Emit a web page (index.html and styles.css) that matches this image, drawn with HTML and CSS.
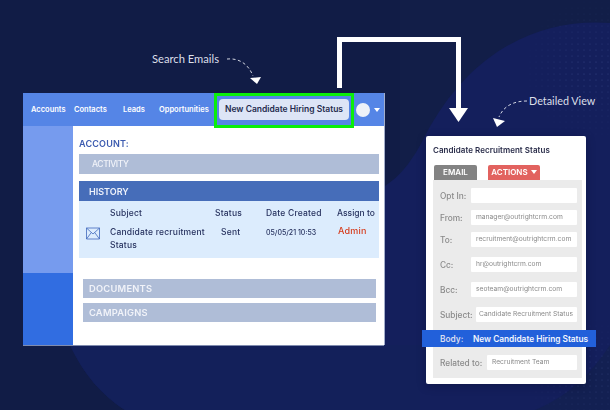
FILE: index.html
```html
<!DOCTYPE html>
<html lang="en">
<head>
<meta charset="utf-8">
<title>Candidate Hiring Status</title>
<link rel="stylesheet" href="styles.css">
</head>
<body>
<main class="canvas">
  <svg class="backdrop" width="610" height="410" viewBox="0 0 610 410" aria-hidden="true">
    <defs>
      <pattern id="dots" width="6" height="6" patternUnits="userSpaceOnUse">
        <circle cx="2" cy="2" r=".6" fill="#5a6bb0"/>
      </pattern>
      <radialGradient id="fade-a"><stop offset="0" stop-color="#fff"/><stop offset="1" stop-color="#000"/></radialGradient>
      <mask id="mask-a"><ellipse cx="590" cy="70" rx="70" ry="75" fill="url(#fade-a)"/></mask>
      <mask id="mask-b"><ellipse cx="590" cy="375" rx="70" ry="60" fill="url(#fade-a)"/></mask>
    </defs>
    <rect width="610" height="410" fill="#121e48"/>
    <path d="M0 0H400V410H0Z" fill="#111c46"/>
    <path d="M610 23C540 18 470 50 425 136C412 162 400 176 385 186L70 345C84 375 102 395 125 410H610Z" fill="#141f5c"/>
    <path d="M70 345H420V410H125C102 395 84 375 70 345Z" fill="#13205a"/>
    <path d="M535 410C570 395 590 375 610 345V410Z" fill="#132052"/>
    <rect width="610" height="410" fill="url(#dots)" mask="url(#mask-a)" opacity=".55"/>
    <rect width="610" height="410" fill="url(#dots)" mask="url(#mask-b)" opacity=".45"/>
  </svg>

  <div class="note note-search">Search Emails</div>
  <svg class="curve curve-search" width="40" height="30" viewBox="0 0 40 30" aria-hidden="true">
    <path d="M1 2C12 1 22 6 27 19" fill="none" stroke="#e8eaf2" stroke-width=".9" stroke-dasharray="3 2.5"/>
    <path d="M24 21L35 20L31 27Z" fill="#fff"/>
  </svg>

  <svg class="flow" width="132" height="86" viewBox="0 0 132 86" aria-hidden="true">
    <path d="M2.5 51V2.5H121.5V72" fill="none" stroke="#fff" stroke-width="5"/>
    <path d="M112 71H131L121.5 85Z" fill="#fff"/>
  </svg>

  <div class="note note-detail">Detailed View</div>
  <svg class="curve curve-detail" width="36" height="34" viewBox="0 0 36 34" aria-hidden="true">
    <path d="M34 5C22 5 11 9 6 21" fill="none" stroke="#e8eaf2" stroke-width=".9" stroke-dasharray="3 2.5"/>
    <path d="M0 22L12 25L4 31Z" fill="#fff"/>
  </svg>

  <section class="crm">
    <header class="crm-bar">
      <nav class="crm-nav">
        <span class="nav-accounts">Accounts</span>
        <span class="nav-contacts">Contacts</span>
        <span class="nav-leads">Leads</span>
        <span class="nav-opps">Opportunities</span>
      </nav>
      <div class="search-hilite"><div class="search-pill">New Candidate Hiring Status</div></div>
      <span class="avatar"></span>
      <span class="caret"></span>
    </header>
    <div class="crm-body">
      <aside class="side"><div class="side-top"></div><div class="side-bottom"></div></aside>
      <div class="content">
        <h2 class="account">ACCOUNT:</h2>
        <div class="band band-activity">ACTIVITY</div>
        <div class="history">
          <div class="history-title">HISTORY</div>
          <div class="history-table">
            <span class="th c-subject">Subject</span>
            <span class="th c-status">Status</span>
            <span class="th c-date">Date Created</span>
            <span class="th c-assign">Assign to</span>
            <svg class="mail" width="14" height="13" viewBox="0 0 14 13" aria-hidden="true">
              <path d="M.5 1H13.5V12H.5ZM.5 1L7 7L13.5 1M.5 12L5.3 5.5M13.5 12L8.7 5.5" fill="none" stroke="#3f68bd" stroke-width=".8"/>
            </svg>
            <span class="td c-subject">Candidate recruitment<br>Status</span>
            <span class="td c-sent">Sent</span>
            <span class="td td-date">05/05/21 10:53</span>
            <span class="td td-admin">Admin</span>
          </div>
        </div>
        <div class="lower">
          <div class="band band-lower">DOCUMENTS</div>
          <div class="band band-lower">CAMPAIGNS</div>
        </div>
      </div>
    </div>
  </section>

  <section class="detail">
    <h3 class="detail-title">Candidate Recruitment Status</h3>
    <div class="tabs">
      <span class="tab tab-email">EMAIL</span>
      <span class="tab tab-actions">ACTIONS <i class="tab-caret"></i></span>
    </div>
    <div class="form">
      <div class="row row-tight"><label class="lbl">Opt In:</label><span class="val"></span></div>
      <div class="row row-tight"><label class="lbl">From:</label><span class="val">manager@outrightcrm.com</span></div>
      <div class="row"><label class="lbl">To:</label><span class="val">recruitment@outrightcrm.com</span></div>
      <div class="row"><label class="lbl">Cc:</label><span class="val">hr@outrightcrm.com</span></div>
      <div class="row"><label class="lbl">Bcc:</label><span class="val">seoteam@outrightcrm.com</span></div>
      <div class="row"><label class="lbl">Subject:</label><span class="val val-subject">Candidate Recruitment Status</span></div>
      <div class="row-spacer"></div>
      <div class="row"><label class="lbl">Related to:</label><span class="val val-related">Recruitment Team</span></div>
    </div>
    <div class="body-strip"><span class="body-lbl">Body:</span><span class="body-val">New Candidate Hiring Status</span></div>
  </section>
</main>
</body>
</html>
```
FILE: styles.css
```css
* { box-sizing: border-box; }
html, body { margin: 0; padding: 0; }
body { width: 610px; height: 410px; overflow: hidden; background: #121e48; font-family: "Inter", "Liberation Sans", sans-serif; }
.canvas { position: relative; width: 610px; height: 410px; overflow: hidden; }
.backdrop { position: absolute; left: 0; top: 0; }
.note { position: absolute; color: #dcdfe9; font-family: "Lato", sans-serif; font-size: 11.2px; line-height: 14px; }
.note-search { left: 152px; top: 52px; }
.note-detail { left: 529px; top: 94px; font-size: 10.8px; }
.curve { position: absolute; }
.curve-search { left: 226px; top: 57px; }
.curve-detail { left: 493px; top: 96px; }
.flow { position: absolute; left: 337px; top: 37px; }

.crm { position: absolute; left: 23px; top: 93px; width: 361px; height: 252px; display: flex; flex-direction: column; background: #fff; box-shadow: 0 1px 0 #7f8bae, 1px 0 0 #a3aecb; will-change: opacity; }
.crm-bar { height: 33px; background: #5585e6; display: flex; align-items: center; color: #fff; font-size: 7.5px; font-weight: 600; position: relative; z-index: 1; }
.crm-nav { width: 191px; display: flex; }
.crm-nav span { display: block; }
.nav-accounts { margin-left: 8px; width: 43px; }
.nav-contacts { width: 49px; }
.nav-leads { width: 36px; }
.nav-opps { white-space: nowrap; }
.search-hilite { width: 140px; height: 35px; margin-top: 2px; border: 3px solid #0aee0a; padding: 3px 2px; background: #5585e6; }
.search-pill { height: 21px; border-radius: 4px; background: #dde5f6; color: #252c4f; font-size: 8.5px; font-weight: 600; text-align: center; line-height: 21px; white-space: nowrap; }
.avatar { width: 14px; height: 14px; border-radius: 50%; background: #eef1f8; margin-left: 2px; }
.caret { width: 0; height: 0; margin-left: 4px; border-left: 3px solid transparent; border-right: 3px solid transparent; border-top: 4px solid #fff; }

.crm-body { flex: 1; display: flex; min-height: 0; }
.side { width: 50px; display: flex; flex-direction: column; }
.side-top { height: 147px; background: #769bee; }
.side-bottom { flex: 1; background: #316de1; }
.content { flex: 1; padding: 12px 5px 0 6px; }
.account { margin: 0 0 4px; color: #3d5cb0; font-size: 9px; line-height: 12px; font-weight: 600; letter-spacing: .2px; }
.band { height: 20px; background: #afbdd7; color: #f1f3f9; font-size: 9px; line-height: 20px; font-weight: 500; padding-left: 6px; }
.band-activity { padding-left: 13px; font-size: 8.5px; letter-spacing: -.4px; }
.band-lower { height: 19px; line-height: 19px; font-size: 9.3px; letter-spacing: .25px; font-weight: 600; }
.history { margin-top: 7px; }
.history-title { height: 20px; background: #466db9; color: #eef2fb; font-size: 9px; line-height: 22px; font-weight: 600; padding-left: 10px; }
.history-table { position: relative; height: 57px; background: #dcecfd; color: #27325f; font-size: 8.5px; font-weight: 500; letter-spacing: .2px; }
.th, .td { position: absolute; white-space: nowrap; line-height: 13px; }
.c-subject { left: 31px; }
.th { top: 6px; }
.td { top: 25px; }
.c-status { left: 136px; }
.c-date { left: 187px; }
.c-assign { left: 258px; letter-spacing: 0; }
.c-sent { left: 142px; }
.td-date { left: 187px; font-size: 7px; letter-spacing: 0; }
.td-admin { left: 259px; top: 23px; color: #d63c1c; font-size: 9px; }
.mail { position: absolute; left: 7px; top: 26px; }
.lower { margin: 21px 3px 0 4px; display: flex; flex-direction: column; gap: 5px; }

.detail { position: absolute; left: 426px; top: 136px; width: 160px; height: 248px; background: #fff; border-radius: 2px; padding: 9px 0 0 7px; box-shadow: 0 2px 8px rgba(5,10,40,.35); color: #8b8b8b; will-change: opacity; }
.detail-title { margin: 0; color: #2a2d4a; font-size: 8px; line-height: 11px; font-weight: 600; white-space: nowrap; letter-spacing: .05px; }
.tabs { display: flex; margin: 9px 0 0 1px; height: 15px; }
.tab { height: 15px; line-height: 15px; color: #fff; font-size: 8px; font-weight: 600; text-align: center; border-radius: 2px 2px 0 0; }
.tab-email { width: 43px; background: #838383; }
.tab-actions { width: 52px; margin-left: 11px; background: #e2625f; }
.tab-caret { display: inline-block; width: 0; height: 0; margin-left: 1px; vertical-align: 1px; border-left: 3px solid transparent; border-right: 3px solid transparent; border-top: 4px solid #fff; }
.form { width: 149px; height: 198px; background: #ebebeb; padding: 8px 5px 0 7px; }
.row { display: flex; align-items: center; height: 15px; margin-bottom: 10px; justify-content: space-between; }
.row-tight { margin-bottom: 7px; }
.lbl { font-size: 8.3px; font-weight: 500; color: #8a8a8a; }
.val { display: block; width: 106px; height: 15px; background: #fff; font-size: 6.7px; line-height: 14px; padding-left: 5px; color: #8a8a8a; white-space: nowrap; overflow: hidden; border-radius: 1px; }
.val-subject { width: 101px; padding-left: 3px; }
.val-related { width: 90px; padding-left: 5px; }
.row-spacer { height: 23px; }
.body-strip { position: absolute; left: -4px; top: 194px; width: 174px; height: 17px; background: #2260da; display: flex; align-items: center; font-weight: 600; padding-left: 18px; }
.body-lbl { width: 33px; font-size: 8.3px; color: #d7def0; }
.body-val { font-size: 8.3px; color: #f3f6fd; white-space: nowrap; }
```
